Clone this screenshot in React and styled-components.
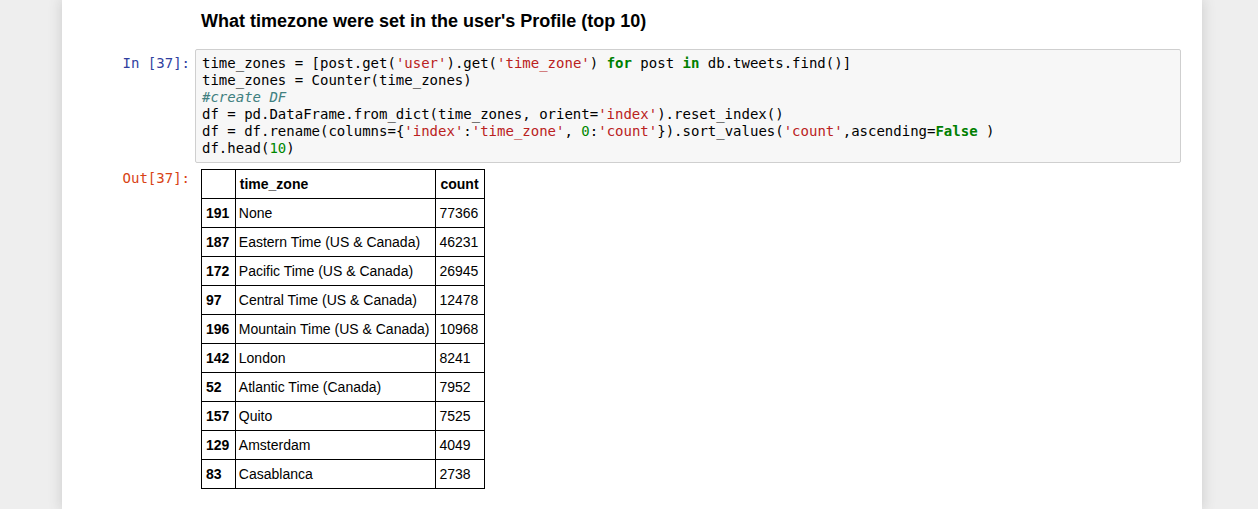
import React from "react";
import styled, { createGlobalStyle } from "styled-components";

const GlobalStyle = createGlobalStyle`
  html, body {
    margin: 0;
    padding: 0;
    background: #eeeeee;
  }
  body {
    font-family: "Liberation Sans", Arial, sans-serif;
    overflow: hidden;
  }
`;

const Page = styled.div`
  height: 509px;
  display: flex;
`;

const Notebook = styled.div`
  width: 1140px;
  margin-left: 62px;
  background: #fff;
  box-shadow: 0 0 12px 1px rgba(87, 87, 87, 0.2);
  padding-top: 10px;
`;

const Heading = styled.h3`
  margin: 0 0 17px 139px;
  font-size: 18px;
  line-height: 22px;
  font-weight: bold;
  color: #000;
`;

const Cell = styled.div`
  display: flex;
  align-items: flex-start;
  margin-top: ${(p) => p.$gap || 0}px;
`;

const Prompt = styled.div`
  width: 133px;
  flex-shrink: 0;
  box-sizing: border-box;
  padding: ${(p) => (p.$out ? "1px 5px 0 0" : "6px 5px 0 0")};
  text-align: right;
  font-family: "DejaVu Sans Mono", monospace;
  font-size: 14px;
  line-height: 17px;
  color: ${(p) => (p.$out ? "#D84315" : "#303F9F")};
`;

const CodeBox = styled.pre`
  margin: 0;
  width: 986px;
  box-sizing: border-box;
  background: #f7f7f7;
  border: 1px solid #cfcfcf;
  border-radius: 2px;
  padding: 5px 6px 5px;
  font-family: "DejaVu Sans Mono", monospace;
  font-size: 14px;
  line-height: 17px;
  color: #000;
`;

const Kw = styled.span`
  color: #008000;
  font-weight: bold;
`;
const Str = styled.span`
  color: #ba2121;
`;
const Num = styled.span`
  color: #008800;
`;
const Comment = styled.span`
  color: #408080;
  font-style: italic;
`;

const Output = styled.div`
  padding-left: 6px;
`;

const Table = styled.table`
  border-collapse: collapse;
  font-size: 14px;
  color: #000;
`;

const Th = styled.th`
  border: 1px solid #000;
  padding: 6px 5px 6px 4px;
  line-height: 16px;
  text-align: left;
  font-weight: bold;
  min-width: ${(p) => p.$min || 0}px;
`;

const Td = styled.td`
  border: 1px solid #000;
  padding: 6px ${(p) => (p.$wide ? 6 : 4)}px 6px 3px;
  line-height: 16px;
  text-align: left;
`;

const rows = [
  ["191", "None", "77366"],
  ["187", "Eastern Time (US & Canada)", "46231"],
  ["172", "Pacific Time (US & Canada)", "26945"],
  ["97", "Central Time (US & Canada)", "12478"],
  ["196", "Mountain Time (US & Canada)", "10968"],
  ["142", "London", "8241"],
  ["52", "Atlantic Time (Canada)", "7952"],
  ["157", "Quito", "7525"],
  ["129", "Amsterdam", "4049"],
  ["83", "Casablanca", "2738"],
];

export default function App() {
  return (
    <>
      <GlobalStyle />
      <Page>
        <Notebook>
          <Heading>What timezone were set in the user's Profile (top 10)</Heading>
          <Cell>
            <Prompt>In&nbsp;[37]:</Prompt>
            <CodeBox>
              time_zones = [post.get(<Str>'user'</Str>).get(<Str>'time_zone'</Str>){" "}
              <Kw>for</Kw> post <Kw>in</Kw> db.tweets.find()]{"\n"}
              time_zones = Counter(time_zones){"\n"}
              <Comment>#create DF</Comment>{"\n"}
              df = pd.DataFrame.from_dict(time_zones, orient=<Str>'index'</Str>).reset_index(){"\n"}
              df = df.rename(columns={"{"}
              <Str>'index'</Str>:<Str>'time_zone'</Str>, <Num>0</Num>:<Str>'count'</Str>
              {"}"}).sort_values(<Str>'count'</Str>,ascending=<Kw>False</Kw> ){"\n"}
              df.head(<Num>10</Num>)
            </CodeBox>
          </Cell>
          <Cell $gap={6}>
            <Prompt $out>Out[37]:</Prompt>
            <Output>
              <Table>
                <thead>
                  <tr>
                    <Th $min={23.8}></Th>
                    <Th>time_zone</Th>
                    <Th>count</Th>
                  </tr>
                </thead>
                <tbody>
                  {rows.map(([i, tz, c]) => (
                    <tr key={i}>
                      <Th>{i}</Th>
                      <Td $wide>{tz}</Td>
                      <Td>{c}</Td>
                    </tr>
                  ))}
                </tbody>
              </Table>
            </Output>
          </Cell>
        </Notebook>
      </Page>
    </>
  );
}
